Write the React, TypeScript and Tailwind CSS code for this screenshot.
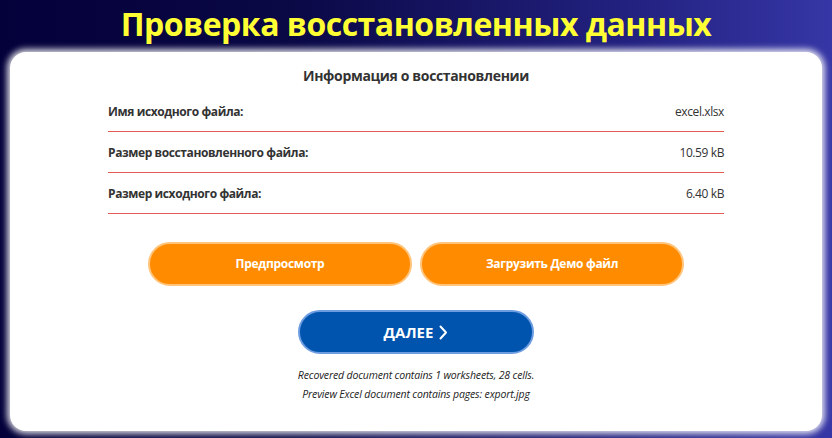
import React from "react";

const rows = [
  { label: "Имя исходного файла:", value: "excel.xlsx" },
  { label: "Размер восстановленного файла:", value: "10.59 kB" },
  { label: "Размер исходного файла:", value: "6.40 kB" },
];

export default function App() {
  return (
    <div
      className="w-[832px] h-[438px] overflow-hidden bg-[linear-gradient(90deg,#03003a_0%,#0a0845_35%,#22217f_75%,#3636a6_100%)] flex flex-col"
      style={{ fontFamily: '"Open Sans", "Noto Sans", sans-serif' }}
    >
      <h1 className="h-[46px] flex items-center justify-center text-[32px] font-bold text-[#ffff33] leading-none tracking-[-0.5px] pt-[2px]">
        Проверка восстановленных данных
      </h1>
      <div className="mx-[10px] mt-[6px] h-[379px] bg-white rounded-[16px] shadow-[0_0_6px_3px_rgba(255,255,255,0.85)] flex flex-col items-center">
        <div className="w-[616px] flex flex-col">
          <div className="h-[39px] pt-[14px] text-center text-[14px] font-bold text-[#333] leading-[20px] tracking-[-0.35px]">
            Информация о восстановлении
          </div>
          {rows.map((r) => (
            <div
              key={r.label}
              className="h-[41px] flex items-center justify-between border-b border-[#e25a5a] text-[12px] text-[#333] pt-[1px] tracking-[-0.4px]"
            >
              <span className="font-bold">{r.label}</span>
              <span>{r.value}</span>
            </div>
          ))}
        </div>
        <div className="mt-[28px] flex gap-[8px]">
          <button className="w-[264px] h-[44px] rounded-full bg-[#ff8c00] border-2 border-[#ffc37a] text-white text-[12px] font-bold tracking-[-0.3px]">
            Предпросмотр
          </button>
          <button className="w-[264px] h-[44px] rounded-full bg-[#ff8c00] border-2 border-[#ffc37a] text-white text-[12px] font-bold tracking-[-0.3px]">
            Загрузить Демо файл
          </button>
        </div>
        <button className="mt-[24px] w-[236px] h-[44px] rounded-full bg-[#0054ae] border-2 border-[#6d9de0] text-white text-[15px] font-bold flex items-center justify-center gap-[6px]">
          <span>ДАЛЕЕ</span>
          <svg width="9" height="15" viewBox="0 0 9 15" fill="none">
            <path d="M1.5 1.5 L7 7.5 L1.5 13.5" stroke="white" strokeWidth="2" strokeLinecap="round" strokeLinejoin="round" />
          </svg>
        </button>
        <div className="mt-[12px] text-[10.5px] italic text-[#222] leading-[19px] text-center tracking-[-0.15px]">
          <div>Recovered document contains 1 worksheets, 28 cells.</div>
          <div>Preview Excel document contains pages: export.jpg</div>
        </div>
      </div>
    </div>
  );
}
